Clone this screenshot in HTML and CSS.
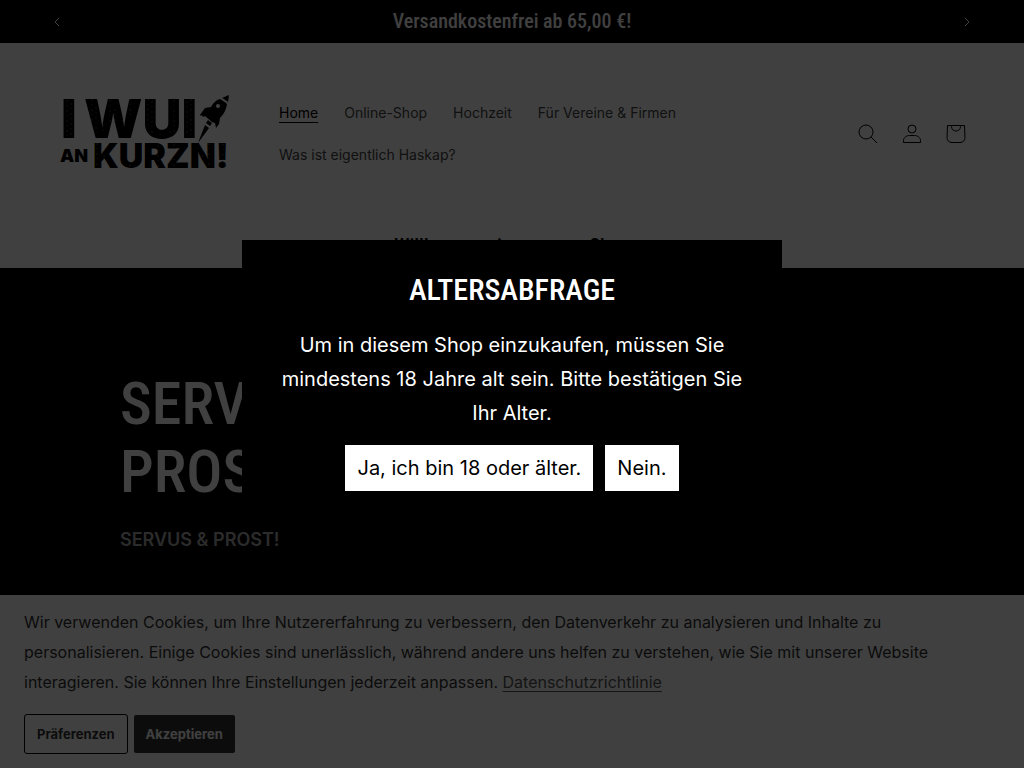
FILE: index.html
```
<!DOCTYPE html>
<html lang="de">
	<head>
		<meta charset="UTF-8">
		<meta name="viewport" content="width=device-width, initial-scale=1.0">
		<title>I WUI an Kurzn!</title>
		<link rel="stylesheet" href="styles.css">
	</head>
	<body>
		<!-- announcement slider -->
		<div class="announcement">
			<button class="arrow" type="button" aria-label="Zurück">
				<svg width="10" height="10" viewBox="0 0 10 10"><path d="M7 1L3 5l4 4" /></svg>
			</button>
			<p class="bar-text">Versandkostenfrei ab 65,00 €!</p>
			<button class="arrow" type="button" aria-label="Weiter">
				<svg width="10" height="10" viewBox="0 0 10 10"><path d="M3 1l4 4-4 4" /></svg>
			</button>
		</div>

		<header class="header">
			<a class="logo" href="#" aria-label="I WUI an Kurzn!">
				<svg width="170" height="78" viewBox="0 0 170 78">
					<g class="logo-text">
						<text x="1" y="43" font-size="54">I</text>
						<text x="24" y="43" font-size="54">WUI</text>
						<text x="0" y="67" font-size="18">AN</text>
						<text x="33" y="73" font-size="34">KURZN!</text>
					</g>
					<!-- worn print scratches -->
					<path class="scratches" d="M7 5v36M11 8v32M32 4v24M36 12v28M43 10v30M50 5v28M55 14v26M63 5v30M70 4v18M88 4v30M92 6v34M100 34v8M110 36v6M114 5v32M127 6v34M131 4v36M37 48v24M44 50v22M56 49v20M70 50v22M84 48v24M98 50v22M114 49v22M130 48v24M142 50v22M149 48v24M163 49v20" />
					<!-- rocket -->
					<path d="M169 0l-1 7c-2-2-4-3-6-4zM160 4c2 1 5 3 7 5-1 6-3 10-7 14l-1 6-3 4-1-5-3-1-7-6-2 1-1-2-1 1-1-1 5-7 6-1c2-4 5-7 9-8zM148 25l4 3-2 3-4-3zM145 30l4 3-11 15z" />
					<circle class="hole" cx="158" cy="11" r="2" />
				</svg>
			</a>

			<nav class="nav">
				<a class="active" href="#">Home</a>
				<a href="#">Online-Shop</a>
				<a href="#">Hochzeit</a>
				<a href="#">Für Vereine &amp; Firmen</a>
				<a href="#">Was ist eigentlich Haskap?</a>
			</nav>

			<div class="icons">
				<button type="button" aria-label="Suchen">
					<svg width="20" height="20" viewBox="0 0 20 20"><circle cx="8" cy="8" r="7" /><path d="M13 13l6 6" /></svg>
				</button>
				<a href="#" aria-label="Einloggen">
					<svg width="20" height="20" viewBox="0 0 20 20"><circle cx="10" cy="5" r="4" /><path d="M1.500 18.500v-2c0-3 3-5 6-5h5c3 0 6 2 6 5v2z" /></svg>
				</a>
				<a href="#" aria-label="Warenkorb">
					<svg width="20" height="20" viewBox="0 0 20 20"><path d="M1.500 1.500h17l.5 12c0 3-2 5-5 5h-8c-3 0-5-2-5-5zM5.500 1.500v1c0 6 9 6 9 0v-1" /></svg>
				</a>
			</div>
		</header>

		<div class="welcome">
			<p class="bar-text">Willkommen in unserem Shop</p>
		</div>

		<main class="hero">
			<h1>SERVUS &amp;<br>PROST!</h1>
			<p>SERVUS &amp; PROST!</p>
		</main>

		<!-- cookie banner -->
		<section class="cookies">
			<p>Wir verwenden Cookies, um Ihre Nutzererfahrung zu verbessern, den Datenverkehr zu analysieren und Inhalte zu personalisieren. Einige Cookies sind unerlässlich, während andere uns helfen zu verstehen, wie Sie mit unserer Website interagieren. Sie können Ihre Einstellungen jederzeit anpassen. <a href="#">Datenschutzrichtlinie</a></p>
			<div class="cookie-buttons">
				<button class="prefs" type="button">Präferenzen</button>
				<button class="accept" type="button">Akzeptieren</button>
			</div>
		</section>

		<!-- age check -->
		<div class="overlay">
			<div class="modal" role="dialog" aria-modal="true" aria-labelledby="age-title">
				<h2 id="age-title">ALTERSABFRAGE</h2>
				<p>Um in diesem Shop einzukaufen, müssen Sie mindestens 18 Jahre alt sein. Bitte bestätigen Sie Ihr Alter.</p>
				<div class="modal-buttons">
					<button type="button">Ja, ich bin 18 oder älter.</button>
					<button type="button">Nein.</button>
				</div>
			</div>
		</div>
	</body>
</html>
```
FILE: styles.css
```
* {
	box-sizing: border-box;
	margin: 0;
	padding: 0;
}

body {
	font-family: Inter, sans-serif;
	font-size: 16px;
	color: #333;
	background: #fff;
	overflow: hidden;
}

button {
	font-family: inherit;
	background: none;
	border: none;
	cursor: pointer;
}

h1,
h2,
.bar-text {
	font-family: "Roboto Condensed", Roboto, sans-serif;
	font-weight: 500;
}

.bar-text {
	font-size: 20px;
	line-height: 43px;
	text-align: center;
}

/* top bar */
.announcement {
	display: flex;
	align-items: center;
	justify-content: space-between;
	padding: 0 50px;
	color: #fff;
	background: #000;
}

.arrow {
	width: 14px;
	height: 43px;
}

.arrow svg {
	fill: none;
	stroke: #fff;
}

/* header */
.header {
	display: grid;
	grid-template-columns: 170px 1fr auto;
	align-items: center;
	min-height: 182px;
	padding: 0 46px 0 60px;
	column-gap: 37px;
}

.logo svg {
	display: block;
}

.logo-text {
	font-family: Inter, sans-serif;
	font-weight: 900;
}

.scratches {
	fill: none;
	stroke: #fff;
	stroke-dasharray: 2 3 1 4;
	opacity: .25;
}

.hole {
	fill: #fff;
}

.nav {
	display: flex;
	flex-wrap: wrap;
	column-gap: 2px;
	max-width: 480px;
}

.nav a {
	padding: 12px;
	font-size: 14px;
	line-height: 18px;
	color: #444;
	text-decoration: none;
}

.nav .active {
	color: #000;
	text-decoration: underline;
	text-underline-offset: 4px;
}

.icons {
	display: flex;
}

.icons a,
.icons button {
	display: flex;
	align-items: center;
	justify-content: center;
	width: 44px;
	height: 44px;
}

.icons svg {
	fill: none;
	stroke: #000;
}

.welcome {
	color: #000;
}

/* hero */
.hero {
	min-height: 500px;
	padding: 102px 120px;
	background: #000;
	color: #fff;
}

.hero h1 {
	font-size: 60px;
	line-height: 68px;
}

.hero p {
	margin-top: 22px;
	font-size: 18px;
	line-height: 24px;
	font-weight: 600;
	color: #acacac;
}

/* cookie banner */
.cookies {
	position: fixed;
	left: 0;
	right: 0;
	bottom: 0;
	padding: 12px 24px 14px;
	background: #fff;
}

.cookies p {
	line-height: 30px;
}

.cookies p a {
	color: #555;
	text-underline-offset: 3px;
}

.cookie-buttons {
	display: flex;
	align-items: center;
	gap: 6px;
	margin-top: 17px;
}

.cookie-buttons button {
	padding: 0 12px;
	font-size: 13px;
	font-weight: 700;
	border-radius: 3px;
}

.prefs {
	height: 40px;
	color: #333;
	border: 1px solid #000;
}

.cookie-buttons .accept {
	height: 38px;
	color: #fff;
	background: #333;
	border-radius: 2px;
}

/* age check */
.overlay {
	position: fixed;
	inset: 0;
	display: flex;
	align-items: center;
	justify-content: center;
	background: rgba(0, 0, 0, .75);
}

.modal {
	width: 540px;
	max-width: 100%;
	padding: 28px 34px 38px;
	text-align: center;
	color: #fff;
	background: #000;
}

.modal h2 {
	font-size: 30px;
	line-height: 44px;
}

.modal p {
	margin-top: 16px;
	font-size: 20px;
	line-height: 34px;
}

.modal-buttons {
	display: flex;
	justify-content: center;
	gap: 12px;
	margin-top: 15px;
}

.modal-buttons button {
	height: 46px;
	padding: 0 12px;
	font-size: 20px;
	color: #000;
	background: #fff;
}
```
